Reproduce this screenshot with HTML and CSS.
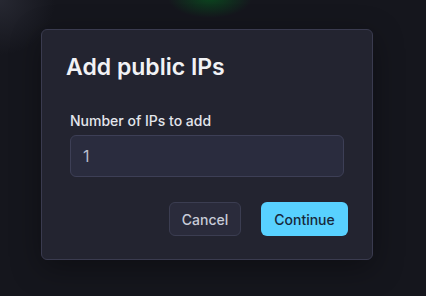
FILE: index.html
```html
<!DOCTYPE html>
<html>
<head>
<meta charset="utf-8">
<link rel="stylesheet" href="styles.css">
</head>
<body>
<div class="dialog">
  <h2 class="title">Add public IPs</h2>
  <div class="body">
    <label class="label">Number of IPs to add</label>
    <div class="input">1</div>
  </div>
  <div class="actions">
    <button class="btn btn-cancel">Cancel</button>
    <button class="btn btn-primary">Continue</button>
  </div>
</div>
</body>
</html>
```

FILE: styles.css
```css
html, body {
  margin: 0;
  padding: 0;
  width: 426px;
  height: 296px;
  overflow: hidden;
}
body {
  background:
    radial-gradient(ellipse 42px 20px at 210px -2px, rgba(8, 80, 30, 0.8), rgba(8, 80, 30, 0) 100%),
    radial-gradient(circle 55px at 0 0, rgba(60, 62, 75, 0.45), rgba(60, 62, 75, 0) 100%),
    #15161d;
  font-family: Inter, "Noto Sans", sans-serif;
  padding: 29px 0 0 41px;
  box-sizing: border-box;
}
.dialog {
  width: 332px;
  height: 231px;
  box-sizing: border-box;
  background: #232430;
  border: 1px solid #3a3b4f;
  border-radius: 6px;
  box-shadow: 0 8px 30px rgba(0, 0, 0, 0.35);
  padding: 23px 24px 24px 24px;
  display: flex;
  flex-direction: column;
}
.title {
  margin: 0;
  font-size: 23px;
  line-height: 28px;
  font-weight: 600;
  color: #f1f2f5;
}
.body {
  display: flex;
  flex-direction: column;
  padding: 0 4px;
  margin-top: 30px;
}
.label {
  font-size: 14px;
  line-height: 20px;
  font-weight: 500;
  color: #e4e6ec;
}
.input {
  margin-top: 4px;
  height: 42px;
  box-sizing: border-box;
  border: 1px solid #3d3f56;
  border-radius: 6px;
  background: #2a2c3e;
  color: #b9bdcc;
  font-size: 16px;
  line-height: 40px;
  padding-left: 12px;
}
.actions {
  display: flex;
  justify-content: flex-end;
  gap: 20px;
  margin-top: 25px;
}
.btn {
  height: 34px;
  box-sizing: border-box;
  border-radius: 6px;
  font-family: Inter, "Noto Sans", sans-serif;
  font-size: 14px;
  font-weight: 500;
  padding: 0;
}
.btn-cancel {
  width: 72px;
  background: #2a2b3b;
  border: 1px solid #3b3d51;
  color: #c8ccd8;
}
.btn-primary {
  width: 87px;
  background: #58d1ff;
  border: none;
  color: #17283a;
}
```
